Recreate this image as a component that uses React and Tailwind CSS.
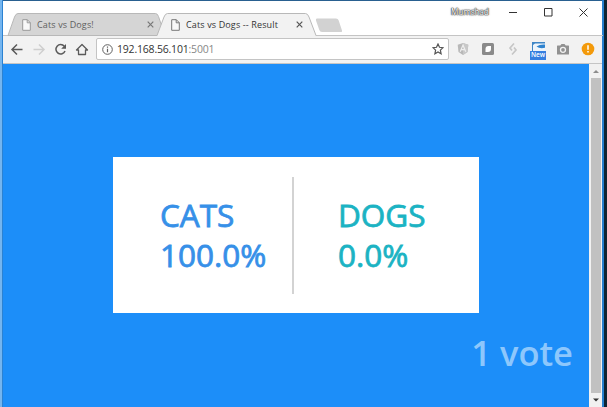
import React from "react";

function PageIcon({ color }) {
  return (
    <svg className="h-[12px] w-[9px] shrink-0" viewBox="0 0 9 12" fill="none" stroke={color} strokeWidth="1">
      <path d="M.7.7h4.6l3 3v7.6H.7z" fill="#f8f8f8" />
      <path d="M5.2.7v3.1h3.1" />
    </svg>
  );
}

function CloseIcon({ color }) {
  return (
    <svg className="h-[7px] w-[7px] shrink-0" viewBox="0 0 7 7" stroke={color} strokeWidth="1.2">
      <path d="M.7.7l5.6 5.6M6.3.7L.7 6.3" />
    </svg>
  );
}

function TabStrip() {
  return (
    <div className="relative h-[22px] shrink-0">
      <svg className="absolute inset-0 h-[23px] w-[600px]" viewBox="3 13 600 23">
        <path d="M3 35.5h600" stroke="#c4c4c4" />
        <path d="M8 35.5L14.5 17q1.300-3.500 3.500-3.500h137.500q2 0 3 3l6.500 19z" fill="#d5d5d5" stroke="#b8b8b8" />
        <path d="M157 36L164 17q1.300-3.500 3.500-3.500h138q2.200 0 3.500 3.500L316 36z" fill="#f2f2f2" />
        <path d="M157 35.500L164 17q1.300-3.500 3.500-3.500h138q2.200 0 3.500 3.500L316 35.500" fill="none" stroke="#b8b8b8" />
        <path d="M317 18.500h19q2 0 2.700 2l3.300 10q.500 1.500-1 1.500h-19q-2 0-2.700-2l-3.300-9.500q-.600-2 1-2z" fill="#d2d2d2" />
      </svg>
      <div className="relative flex h-full items-center pl-[19px] pt-[1px] font-['Open_Sans','Noto_Sans',sans-serif] text-[9px] tracking-[0.130px]">
        <div className="flex w-[149px] items-center">
          <PageIcon color="#999" />
          <span className="ml-1.5 w-[110px] whitespace-nowrap text-[#606060]">Cats vs Dogs!</span>
          <CloseIcon color="#777" />
        </div>
        <div className="flex items-center">
          <PageIcon color="#777" />
          <span className="ml-1.5 w-[110px] whitespace-nowrap text-[#333]">Cats vs Dogs -- Result</span>
          <CloseIcon color="#555" />
        </div>
      </div>
    </div>
  );
}

function WindowControls() {
  return (
    <div className="flex h-[11px] shrink-0 items-center pl-[448px]">
      <span className="w-[54px] whitespace-nowrap font-['Open_Sans',sans-serif] text-[8.300px] leading-none tracking-[-0.200px] text-white [text-shadow:0_0_1px_#333,0_0_1px_#333,0_0_2px_#555,0_0_1px_#444]">
        Mumshad
      </span>
      <svg className="h-[10px] w-[86px] -translate-y-px" viewBox="0 0 86 10" fill="none" stroke="#333" strokeWidth="1">
        <path d="M4 5.500h8M39.500 1.500h7.500v7.500h-7.500zM74.500 1.500l8 8M82.500 1.500l-8 8" />
      </svg>
    </div>
  );
}

function NavIcons() {
  return (
    <svg className="h-[14px] w-[84px] shrink-0" viewBox="7 42 84 14" fill="none" stroke="#5a5a5a" strokeWidth="1.500">
      <path d="M22.500 49.500H12M17 44.500l-5 5 5 5" />
      <path d="M33.500 49.500H44M39 44.500l5 5-5 5" stroke="#cfcfcf" />
      <path d="M64.300 46.300A4.700 4.700 0 1 0 65 51" />
      <path d="M66 44v4.800h-4.800z" fill="#5a5a5a" stroke="none" />
      <path d="M76.500 50L82 44.500l5.500 5.500h-2v4.500h-7V50z" strokeWidth="1.300" strokeLinejoin="round" />
    </svg>
  );
}

function Extensions() {
  return (
    <div className="ml-[7px] flex shrink-0 items-center gap-[11px]">
      <svg className="h-[14px] w-[14px]" viewBox="0 0 14 14">
        <path d="M7 1l5.300 1.800-.8 7.200L7 13l-4.500-3-.8-7.200z" fill="#b8b8b8" />
        <path d="M7 1l5.300 1.800-.8 7.200L7 13z" fill="#c8c8c8" />
        <path d="M4.200 9.800L7 3l2.800 6.800M5.500 7.700h3" fill="none" stroke="#eee" strokeWidth="1.200" />
      </svg>
      <svg className="h-[14px] w-[14px]" viewBox="0 0 14 14">
        <rect x="1" y="1" width="12" height="12" rx="1.500" fill="#8a8a8a" />
        <path d="M4.500 7q0-3 3-3H10v3q0 3-3 3H4.500z" fill="#fff" />
      </svg>
      <svg className="h-[14px] w-[14px]" viewBox="0 0 14 14" fill="none" stroke="#c6c6c6" strokeWidth="1.700">
        <path d="M8 1.500L4 6l2 2.500M6 12.500L10 8 8 5.500" />
      </svg>
      <div className="flex h-[18px] w-[16px] -translate-x-px translate-y-[2px] flex-col items-center">
        <svg className="h-[9px] w-[13px] shrink-0" viewBox="0 0 13 9">
          <rect width="13" height="9" fill="#eef5fb" />
          <path d="M0 0h13v1.500H3L1 3v6H0z" fill="#3f86c6" />
          <path d="M4.500 4.500Q8 2 13 2.500v3.200Q8 7 4.500 4.500z" fill="#2f83cf" />
        </svg>
        <span className="flex h-[9px] w-[16px] shrink-0 items-center justify-center bg-[#367fe0] font-['Open_Sans',sans-serif] text-[6.500px] font-semibold leading-none text-white">New</span>
      </div>
      <svg className="h-[14px] w-[14px] -translate-x-[2px]" viewBox="0 0 14 14">
        <path d="M1.500 3.500h2.800L5.500 2h3l1.200 1.500h2.800q.5 0 .5.500v8q0 .500-.5.500h-11Q1 12.500 1 12V4q0-.5.5-.5z" fill="#919191" />
        <circle cx="7" cy="7.800" r="2.500" fill="none" stroke="#f2f2f2" strokeWidth="1.300" />
      </svg>
      <svg className="h-[14px] w-[14px] -translate-x-[2px]" viewBox="0 0 14 14">
        <circle cx="7" cy="7" r="6.300" fill="#f39a0b" />
        <path d="M7 3.200v4.500M7 9v1.600" stroke="#fff" strokeWidth="1.500" />
      </svg>
    </div>
  );
}

function Toolbar() {
  return (
    <div className="flex h-[29px] shrink-0 items-center border-b border-[#c5c5c5] bg-[#f2f2f2] pl-[4px]">
      <NavIcons />
      <div className="ml-[5px] flex h-[22px] w-[353px] shrink-0 items-center rounded-[2px] border border-[#c4c4c4] bg-white pl-[5px] pr-[4px]">
        <svg className="h-[11px] w-[11px]" viewBox="0 0 11 11" fill="none" stroke="#606060">
          <circle cx="5.500" cy="5.500" r="4.800" />
          <path d="M5.500 4.700v3.500M5.500 2.600v1.200" strokeWidth="1.200" />
        </svg>
        <span className="ml-[4px] flex-1 pt-px font-['Open_Sans','Noto_Sans',sans-serif] text-[10.500px] leading-none tracking-[-0.200px] text-[#333]">
          192.168.56.101<span className="text-[#888]">:5001</span>
        </span>
        <svg className="h-[12px] w-[12px]" viewBox="0 0 12 12" fill="none" stroke="#555" strokeWidth="1.200">
          <path d="M6 1l1.500 3.300 3.500.4-2.600 2.400.7 3.600L6 8.900l-3.100 1.800.7-3.600L1 4.700l3.500-.4z" />
        </svg>
      </div>
      <Extensions />
    </div>
  );
}

function Choice({ label, value, className }) {
  return (
    <div className={className}>
      <div>{label}</div>
      <div>{value}</div>
    </div>
  );
}

function ResultPage() {
  return (
    <main className="flex w-[586px] flex-col bg-[#1c8ef9] font-['Open_Sans','Noto_Sans',sans-serif]">
      <div className="ml-[110px] mt-[93px] flex h-[156px] w-[366px] shrink-0 items-center bg-white text-[31.500px] leading-[40.500px] [-webkit-text-stroke:0.800px_currentColor]">
        <Choice label="CATS" value="100.0%" className="w-[179px] pl-[47px] text-[#3690e8]" />
        <div className="h-[117px] w-[2px] bg-[#d3d3d3]" />
        <Choice label="DOGS" value="0.0%" className="pl-[44px] text-[#1bb3c3]" />
      </div>
      <div className="mt-[17px] pr-[16px] text-right text-[34.500px] font-semibold leading-[46px] text-[#8dc7fc]">1 vote</div>
    </main>
  );
}

function Scrollbar() {
  return (
    <div className="flex w-[13px] flex-col items-center bg-[#f1f1f1]">
      <svg className="h-[14px] w-[13px] shrink-0" viewBox="0 0 13 14"><path d="M4 9l3-3 3 3z" fill="#8c8c8c" /></svg>
      <div className="ml-[1px] w-[10px] flex-1 bg-[#c1c1c1]" />
      <svg className="h-[14px] w-[13px] shrink-0" viewBox="0 0 13 14"><path d="M4 5.500l3 3 3-3z" fill="#333" /></svg>
    </div>
  );
}

export default function App() {
  return (
    <div className="flex h-[407px] w-[607px] overflow-hidden bg-[#0d2434]">
      <div className="w-[2px] shrink-0 bg-[#74b5ef]" />
      <div className="w-px shrink-0 bg-[#2b82d2]" />
      <div className="flex w-[599px] shrink-0 flex-col bg-white">
        <div className="h-px shrink-0 bg-[#296090]" />
        <div className="h-[6px] shrink-0" />
        <WindowControls />
        <div className="-mt-[5px]"><TabStrip /></div>
        <Toolbar />
        <div className="flex flex-1">
          <ResultPage />
          <Scrollbar />
        </div>
      </div>
      <div className="w-[2px] shrink-0 bg-[#2680d0]" />
    </div>
  );
}
